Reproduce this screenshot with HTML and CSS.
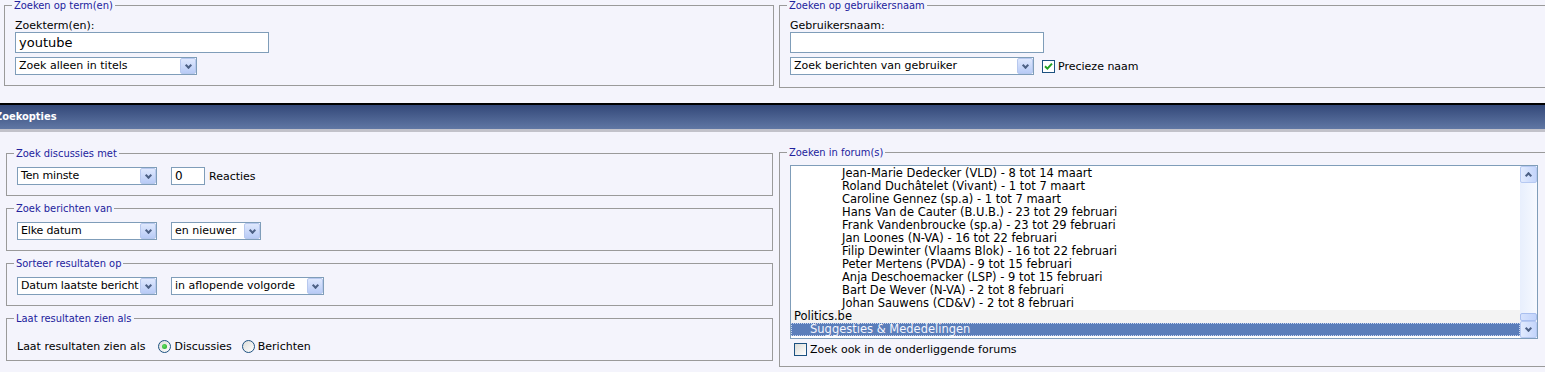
FILE: index.html
```html
<!DOCTYPE html>
<html lang="nl">
<head>
    <meta charset="UTF-8">
    <title>Zoeken</title>
    <link rel="stylesheet" href="styles.css">
</head>
<body>

<div class="row row-top">
    <div class="cell cell-left">
        <fieldset class="fs">
            <legend>Zoeken op term(en)</legend>
            <div class="lbl">Zoekterm(en):</div>
            <input class="txt" type="text" value="youtube">
            <div class="line">
                <span class="sel w-titels"><span class="val">Zoek alleen in titels</span><span class="btn"></span></span>
            </div>
        </fieldset>
    </div>
    <div class="cell cell-right">
        <fieldset class="fs fs-user">
            <legend>Zoeken op gebruikersnaam</legend>
            <div class="lbl">Gebruikersnaam:</div>
            <input class="txt" type="text" value="">
            <div class="line">
                <span class="sel w-user"><span class="val">Zoek berichten van gebruiker</span><span class="btn"></span></span>
                <span class="cb checked"><svg width="11" height="11" viewBox="0 0 11 11"><path d="M2 5.2 L4.4 7.6 L9 2.6" fill="none" stroke="#21a121" stroke-width="2"/></svg></span>
                <span class="cb-text">Precieze naam</span>
            </div>
        </fieldset>
    </div>
</div>

<!-- Zoekopties -->
<div class="thead"><span>Zoekopties</span></div>

<div class="row row-opts">
    <div class="cell cell-left stack">
        <fieldset class="fs">
            <legend>Zoek discussies met</legend>
            <div class="line">
                <span class="sel w-short"><span class="val">Ten minste</span><span class="btn"></span></span>
                <input class="txt txt-small" type="text" value="0">
                <span>Reacties</span>
            </div>
        </fieldset>
        <fieldset class="fs">
            <legend>Zoek berichten van</legend>
            <div class="line">
                <span class="sel w-short"><span class="val">Elke datum</span><span class="btn"></span></span>
                <span class="sel w-newer"><span class="val">en nieuwer</span><span class="btn"></span></span>
            </div>
        </fieldset>
        <fieldset class="fs">
            <legend>Sorteer resultaten op</legend>
            <div class="line">
                <span class="sel w-short"><span class="val">Datum laatste bericht</span><span class="btn"></span></span>
                <span class="sel w-order"><span class="val">in aflopende volgorde</span><span class="btn"></span></span>
            </div>
        </fieldset>
        <fieldset class="fs fs-radio">
            <legend>Laat resultaten zien als</legend>
            <div class="line">
                <span>Laat resultaten zien als</span>
                <span class="radio checked"></span><span class="radio-text">Discussies</span>
                <span class="radio"></span><span class="radio-text">Berichten</span>
            </div>
        </fieldset>
    </div>
    <div class="cell cell-right">
        <fieldset class="fs fs-forums">
            <legend>Zoeken in forum(s)</legend>
            <div class="listbox">
                <div class="opts">
                    <div class="opt d3">Jean-Marie Dedecker (VLD) - 8 tot 14 maart</div>
                    <div class="opt d3">Roland Duchâtelet (Vivant) - 1 tot 7 maart</div>
                    <div class="opt d3">Caroline Gennez (sp.a) - 1 tot 7 maart</div>
                    <div class="opt d3">Hans Van de Cauter (B.U.B.) - 23 tot 29 februari</div>
                    <div class="opt d3">Frank Vandenbroucke (sp.a) - 23 tot 29 februari</div>
                    <div class="opt d3">Jan Loones (N-VA) - 16 tot 22 februari</div>
                    <div class="opt d3">Filip Dewinter (Vlaams Blok) - 16 tot 22 februari</div>
                    <div class="opt d3">Peter Mertens (PVDA) - 9 tot 15 februari</div>
                    <div class="opt d3">Anja Deschoemacker (LSP) - 9 tot 15 februari</div>
                    <div class="opt d3">Bart De Wever (N-VA) - 2 tot 8 februari</div>
                    <div class="opt d3">Johan Sauwens (CD&amp;V) - 2 tot 8 februari</div>
                    <div class="opt d0 group">Politics.be</div>
                    <div class="opt d1 selected">Suggesties &amp; Mededelingen</div>
                </div>
                <div class="vscroll">
                    <span class="sb-btn sb-up"></span>
                    <span class="sb-track"></span>
                    <span class="sb-thumb"></span>
                    <span class="sb-btn sb-down"></span>
                </div>
            </div>
            <div class="line line-sub">
                <span class="cb"></span>
                <span class="cb-text">Zoek ook in de onderliggende forums</span>
            </div>
        </fieldset>
    </div>
</div>

</body>
</html>
```

FILE: styles.css
```css
html, body {
    margin: 0;
    padding: 0;
    overflow: hidden;
}
body {
    width: 1600px;
    background-color: #f4f4fc;
    color: #000;
    font: 11px "DejaVu Sans", Verdana, sans-serif;
}
.row {
    display: grid;
    grid-template-columns: 779px 821px;
    align-items: start;
}
.cell-left {
    padding: 0 5px 0 4px;
}
.row-opts {
    margin-top: 15px;
}
.row-opts .cell-left {
    padding: 1px 6px 0 6px;
}
.stack {
    display: flex;
    flex-direction: column;
    gap: 7px;
}

/* fieldsets */
.fs {
    margin: 0;
    padding: 8px 10px 10px 10px;
    border: 1px solid #9a9a9a;
    min-width: 0;
}
.fs legend {
    color: #22229c;
    font: 11px/11px "DejaVu Sans Condensed", "DejaVu Sans", sans-serif;
    font-stretch: condensed;
    padding: 0 2px;
    margin-left: -3px;
}
.fs-user {
    padding-bottom: 12px;
}
.fs-radio {
    padding-top: 13px;
    padding-bottom: 5px;
}
.fs-forums {
    padding-top: 7px;
    padding-bottom: 10px;
}
.lbl {
    line-height: 13px;
}
.line {
    display: flex;
    align-items: center;
    height: 18px;
    white-space: nowrap;
}
.txt + .line {
    margin-top: 4px;
}

/* invoervelden */
.txt {
    display: block;
    box-sizing: border-box;
    width: 254px;
    height: 21px;
    margin: 0;
    padding: 0 3px;
    border: 1px solid #7f9db9;
    background: #fff;
    font: 13px "DejaVu Sans", Verdana, sans-serif;
    color: #000;
}
.txt-small {
    width: 34px;
    height: 18px;
    margin: 0 4px 0 0;
    font-size: 12px;
}

/* keuzelijsten */
.sel {
    display: inline-flex;
    box-sizing: border-box;
    height: 18px;
    border: 1px solid #7f9db9;
    background: #fff;
    margin-right: 14px;
}
.sel .val {
    flex: 1;
    padding-left: 3px;
    line-height: 16px;
    overflow: hidden;
    white-space: nowrap;
}
.sel .btn {
    flex: none;
    width: 16px;
    box-sizing: border-box;
    border: 1px solid #b7c8ee;
    border-radius: 2px;
    background: linear-gradient(#dfe8fd, #b8cbf6);
    display: flex;
    align-items: center;
    justify-content: center;
}
.sel .btn::after,
.sb-btn::after {
    content: "";
    width: 3px;
    height: 3px;
    border-right: 2px solid #4d6185;
    border-bottom: 2px solid #4d6185;
    transform: translateY(-1px) rotate(45deg);
}
.w-titels { width: 182px; }
.w-user { width: 244px; margin-right: 8px; }
.w-short { width: 140px; }
.w-short .val { letter-spacing: -0.15px; }
.w-newer { width: 90px; }
.w-order { width: 153px; }

/* vinkjes en rondjes */
.cb {
    display: inline-flex;
    align-items: center;
    justify-content: center;
    box-sizing: border-box;
    width: 13px;
    height: 13px;
    border: 1px solid #1c5180;
    background: linear-gradient(135deg, #dcdcd7, #fff);
}
.cb.checked {
    background: #fff;
}
.cb-text {
    margin-left: 3px;
}
.radio {
    display: inline-flex;
    align-items: center;
    justify-content: center;
    box-sizing: border-box;
    width: 13px;
    height: 13px;
    border: 1px solid #1c5180;
    border-radius: 50%;
    background: linear-gradient(135deg, #dcdcd7, #fff);
    margin-left: 13px;
}
.radio.checked::after {
    content: "";
    width: 5px;
    height: 5px;
    border-radius: 50%;
    background: radial-gradient(circle at 40% 40%, #5fe05f, #21a121);
}
.radio-text {
    margin-left: 3px;
}
.radio-text + .radio {
    margin-left: 10px;
}

/* balk Zoekopties */
.thead {
    margin-top: 15px;
    height: 24px;
    border-top: 2px solid #000;
    border-bottom: 3px solid #c2c2ca;
    background: linear-gradient(#334879, #6077a4);
    color: #fff;
    font: bold 11px/24px "DejaVu Sans Condensed", "DejaVu Sans", sans-serif;
    font-stretch: condensed;
    text-indent: -5px;
}

/* forumlijst */
.listbox {
    display: flex;
    box-sizing: border-box;
    width: 748px;
    height: 174px;
    border: 1px solid #7f9db9;
    background: #fff;
}
.opts {
    flex: 1;
    overflow: hidden;
    padding-top: 1px;
    font-size: 11.5px;
}
.opt {
    height: 13px;
    line-height: 13px;
    white-space: nowrap;
    box-sizing: border-box;
}
.d0 { padding-left: 3px; }
.d1 { padding-left: 19px; }
.d3 { padding-left: 51px; }
.group {
    background: #f3f3f3;
}
.selected {
    background: #5b7eba;
    color: #f4f6ff;
    border: 1px dotted #c9d6f0;
    line-height: 11px;
    padding-left: 18px;
}
.vscroll {
    width: 17px;
    display: flex;
    flex-direction: column;
    background: linear-gradient(90deg, #e8effd, #f6f9ff);
}
.sb-btn {
    height: 17px;
    box-sizing: border-box;
    border: 1px solid #b6c9f2;
    border-radius: 2px;
    background: linear-gradient(90deg, #e2ebfe, #c4d5fb);
    display: flex;
    align-items: center;
    justify-content: center;
}
.sb-up::after {
    transform: translateY(1px) rotate(-135deg);
}
.sb-track {
    flex: 1;
}
.sb-thumb {
    height: 8px;
    box-sizing: border-box;
    border: 1px solid #a9bfef;
    border-radius: 2px;
    background: linear-gradient(90deg, #d6e2fd, #c1d3fb);
}
.line-sub {
    margin-top: 3px;
    height: 14px;
    padding-left: 4px;
}
```
